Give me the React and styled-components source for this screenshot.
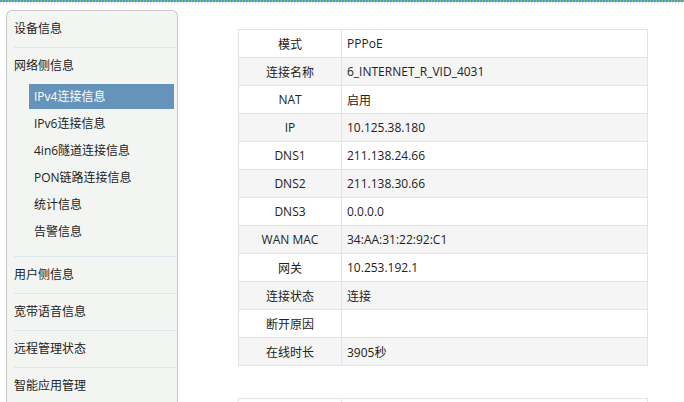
import React from "react";
import styled, { createGlobalStyle } from "styled-components";

const Global = createGlobalStyle`
  html, body { margin: 0; padding: 0; background: #fff; overflow: hidden; }
  body {
    font-family: "Open Sans", "Noto Sans CJK SC", sans-serif;
    font-size: 12px;
    color: #222;
  }
`;

const TopStrip = styled.div`
  height: 4px;
  background:
    repeating-linear-gradient(90deg, #4f9fc4 0 2px, #7fbf6a 2px 3px) top / 100% 2px no-repeat,
    repeating-linear-gradient(90deg, #ecd8e6 0 1px, #ffffff 1px 3px) bottom / 100% 2px no-repeat;
`;

const Page = styled.div`
  display: flex;
  align-items: flex-start;
  padding: 6px 0 0 6px;
`;

const Sidebar = styled.nav`
  width: 163px;
  flex: none;
  background: #f3f5f2;
  border: 1px solid #c9cbc9;
  border-bottom: none;
  border-radius: 6px 6px 0 0;
  padding-left: 7px;
  padding-bottom: 40px;
`;

const Group = styled.div`
  border-bottom: 1px solid #dde6ea;
  padding-bottom: ${(p) => (p.$open ? "12px" : "0")};
`;

const GroupTitle = styled.div`
  height: 36px;
  line-height: 36px;
  margin-top: ${(p) => (p.$first ? "-1px" : "0")};
  color: #222;
`;

const SubList = styled.div`
  display: flex;
  flex-direction: column;
  gap: 2px;
  margin: 0 3px 0 15px;
`;

const SubItem = styled.div`
  height: 25px;
  line-height: 26px;
  padding-left: 5px;
  background: ${(p) => (p.$active ? "#6593b9" : "transparent")};
  color: ${(p) => (p.$active ? "#fff" : "#222")};
`;

const Content = styled.main`
  margin-left: 60px;
  padding-top: 19px;
  display: flex;
  flex-direction: column;
  gap: 32px;
`;

const Table = styled.table`
  width: 410px;
  border-collapse: collapse;
  table-layout: fixed;
`;

const Row = styled.tr`
  height: 28px;
  background: ${(p) => (p.$alt ? "#f5f5f5" : "#fff")};
`;

const Label = styled.td`
  width: 102px;
  border: 1px solid #e3e3e3;
  text-align: center;
  padding: 0;
  height: 27px;
`;

const Value = styled.td`
  border: 1px solid #e3e3e3;
  padding: 0 0 0 5px;
  height: 27px;
`;

const rows = [
  ["模式", "PPPoE"],
  ["连接名称", "6_INTERNET_R_VID_4031"],
  ["NAT", "启用"],
  ["IP", "10.125.38.180"],
  ["DNS1", "211.138.24.66"],
  ["DNS2", "211.138.30.66"],
  ["DNS3", "0.0.0.0"],
  ["WAN MAC", "34:AA:31:22:92:C1"],
  ["网关", "10.253.192.1"],
  ["连接状态", "连接"],
  ["断开原因", ""],
  ["在线时长", "3905秒"],
];

const subs = [
  "IPv4连接信息",
  "IPv6连接信息",
  "4in6隧道连接信息",
  "PON链路连接信息",
  "统计信息",
  "告警信息",
];

export default function App() {
  return (
    <>
      <Global />
      <TopStrip />
      <Page>
        <Sidebar>
          <Group>
            <GroupTitle>设备信息</GroupTitle>
          </Group>
          <Group $open>
            <GroupTitle>网络侧信息</GroupTitle>
            <SubList>
              {subs.map((s, i) => (
                <SubItem key={s} $active={i === 0}>
                  {s}
                </SubItem>
              ))}
            </SubList>
          </Group>
          <Group>
            <GroupTitle>用户侧信息</GroupTitle>
          </Group>
          <Group>
            <GroupTitle>宽带语音信息</GroupTitle>
          </Group>
          <Group>
            <GroupTitle>远程管理状态</GroupTitle>
          </Group>
          <Group>
            <GroupTitle>智能应用管理</GroupTitle>
          </Group>
        </Sidebar>
        <Content>
          <Table>
            <tbody>
              {rows.map(([k, v], i) => (
                <Row key={k} $alt={i % 2 === 1}>
                  <Label>{k}</Label>
                  <Value>{v}</Value>
                </Row>
              ))}
            </tbody>
          </Table>
          <Table>
            <tbody>
              <Row>
                <Label></Label>
                <Value></Value>
              </Row>
              <Row $alt>
                <Label></Label>
                <Value></Value>
              </Row>
            </tbody>
          </Table>
        </Content>
      </Page>
    </>
  );
}
